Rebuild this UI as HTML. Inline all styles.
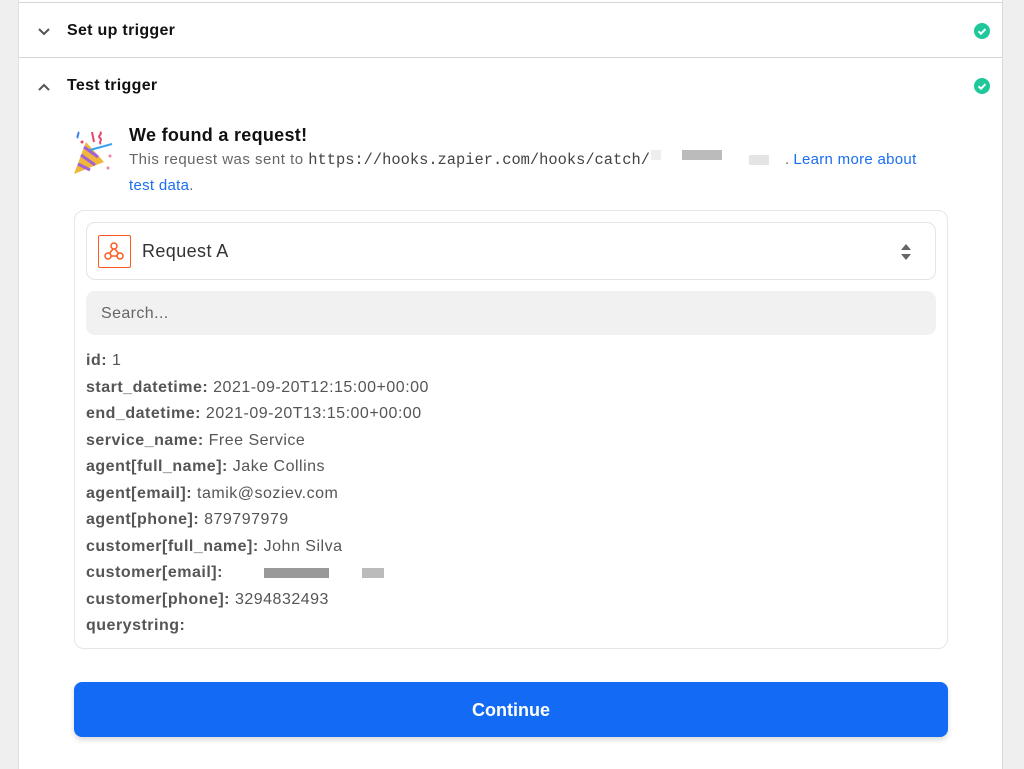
<!DOCTYPE html>
<html><head><meta charset="utf-8"><style>
*{box-sizing:border-box;margin:0;padding:0}
body{width:1024px;height:769px;overflow:hidden;background:#efefef;font-family:"Liberation Sans",sans-serif;position:relative}
.card{position:absolute;left:18px;top:0;width:985px;height:769px;background:#fff;border-left:1px solid #e0e0e0;border-right:1px solid #d8d8d8}
.topline{position:absolute;left:0;right:0;top:2px;height:1px;background:#d5d5d5}
.div{position:absolute;left:0;right:0;top:57px;height:1px;background:#d5d5d5}
.hdr{position:absolute;left:48px;font-weight:bold;font-size:16px;color:#111;letter-spacing:0.3px}
.chev{position:absolute;left:18px}
.chk{position:absolute;left:955px;width:16px;height:16px;border-radius:50%;background:#1ec89a}
.a{position:absolute;color:#222}
.box{position:absolute;left:55px;top:210px;width:874px;height:439px;border:1px solid #e6e6e6;border-radius:10px}
.sel{position:absolute;left:67px;top:222px;width:850px;height:58px;border:1px solid #e4e4e4;border-radius:9px}
.search{position:absolute;left:67px;top:291px;width:850px;height:44px;background:#f1f1f1;border-radius:9px;color:#666;font-size:16px;padding:14px 0 0 15px;letter-spacing:0.4px}
.kv{position:absolute;left:67px;top:348px;font-size:16px;line-height:26.5px;color:#555;letter-spacing:0.5px}
.kv b{color:#555}
.btn{position:absolute;left:55px;top:682px;width:874px;height:55px;background:#136bf5;border-radius:8px;color:#fff;font-weight:bold;font-size:18px;text-align:center;line-height:57px;box-shadow:0 3px 6px rgba(0,0,0,.15)}
.px{position:absolute;height:10px}
</style></head><body>
<div class="card">
<div class="topline"></div>
<svg class="chev" style="top:27px" width="14" height="10" viewBox="0 0 14 10"><path d="M2 2l5 5 5-5" stroke="#555" stroke-width="2" fill="none"/></svg>
<div class="hdr" style="top:22px">Set up trigger</div>
<div class="chk" style="top:23px"><svg width="16" height="16"><path d="M4.5 8.3l2.5 2.4 4.5-4.6" stroke="#fff" stroke-width="2" fill="none"/></svg></div>
<div class="div"></div>
<svg class="chev" style="top:82px" width="14" height="10" viewBox="0 0 14 10"><path d="M2 8l5-5 5 5" stroke="#555" stroke-width="2" fill="none"/></svg>
<div class="hdr" style="top:77px">Test trigger</div>
<div class="chk" style="top:78px"><svg width="16" height="16"><path d="M4.5 8.3l2.5 2.4 4.5-4.6" stroke="#fff" stroke-width="2" fill="none"/></svg></div>
<svg style="position:absolute;left:53px;top:128px" width="46" height="48" viewBox="0 0 46 48"><path d="M2 46L14 14 32 34z" fill="#f0b73a"/><path d="M6 36l12 6M9 27l14 10M12 19l14 10" stroke="#a262d6" stroke-width="3"/><path d="M18 22l22-6" stroke="#3aa0f0" stroke-width="2"/><path d="M20 4l2 10M28 4c3 2-3 4 0 6s-2 4 1 6" stroke="#e8456a" stroke-width="2" fill="none"/><path d="M6 4c2 2-2 4 0 6" stroke="#3a80f0" stroke-width="2" fill="none"/><circle cx="38" cy="28" r="1.5" fill="#f080a0"/><circle cx="36" cy="40" r="1.5" fill="#f080a0"/><circle cx="10" cy="14" r="1.5" fill="#e8456a"/></svg>
<div class="a" style="left:110px;top:125px;font-weight:bold;font-size:18px;color:#111;letter-spacing:0.3px">We found a request!</div>
<div class="a" style="left:110px;top:147px;font-size:15px;color:#666;line-height:25px;width:830px;white-space:nowrap"><span style="letter-spacing:0.5px">This request was sent to </span><span style="font-family:'Liberation Mono',monospace;font-size:15.4px;color:#444">https://hooks.zapier.com/hooks/catch/</span><span style="display:inline-block;width:135px"></span>. <span style="color:#1a6ef2;letter-spacing:0.3px">Learn more about</span><br><span style="color:#1a6ef2;letter-spacing:0.3px">test data</span>.</div>
<div class="px" style="left:632px;top:150px;width:10px;background:#eee"></div>
<div class="px" style="left:663px;top:150px;width:40px;background:#bbb"></div>
<div class="px" style="left:730px;top:155px;width:20px;background:#e4e4e4"></div>
<div class="box"></div>
<div class="sel">
<div style="position:absolute;left:11px;top:12px;width:33px;height:33px;border:1.5px solid #ff5a1f;border-radius:2px"><svg width="30" height="30" viewBox="0 0 30 30"><circle cx="15" cy="10" r="3" stroke="#ff5a1f" stroke-width="1.5" fill="none"/><circle cx="9" cy="20" r="3" stroke="#ff5a1f" stroke-width="1.5" fill="none"/><circle cx="21" cy="20" r="3" stroke="#ff5a1f" stroke-width="1.5" fill="none"/><path d="M14 13l-4 5M12 20h6M16 13l4 5" stroke="#ff5a1f" stroke-width="1.5"/></svg></div>
<div style="position:absolute;left:55px;top:18px;font-size:18px;color:#333;letter-spacing:0.4px">Request A</div>
<svg style="position:absolute;left:813px;top:20px" width="12" height="18"><path d="M1 7l5-6 5 6zM1 11l5 6 5-6z" fill="#666"/></svg>
</div>
<div class="search">Search...</div>
<div class="kv">
<b>id:</b> 1<br><b>start_datetime:</b> 2021-09-20T12:15:00+00:00<br><b>end_datetime:</b> 2021-09-20T13:15:00+00:00<br><b>service_name:</b> Free Service<br><b>agent[full_name]:</b> Jake Collins<br><b>agent[email]:</b> tamik@soziev.com<br><b>agent[phone]:</b> 879797979<br><b>customer[full_name]:</b> John Silva<br><b>customer[email]:</b><br><b>customer[phone]:</b> 3294832493<br><b>querystring:</b>
</div>
<div class="px" style="left:245px;top:568px;width:65px;background:#999"></div>
<div class="px" style="left:343px;top:568px;width:22px;background:#bbb"></div>
<div class="btn">Continue</div>
</div>
</body></html>
